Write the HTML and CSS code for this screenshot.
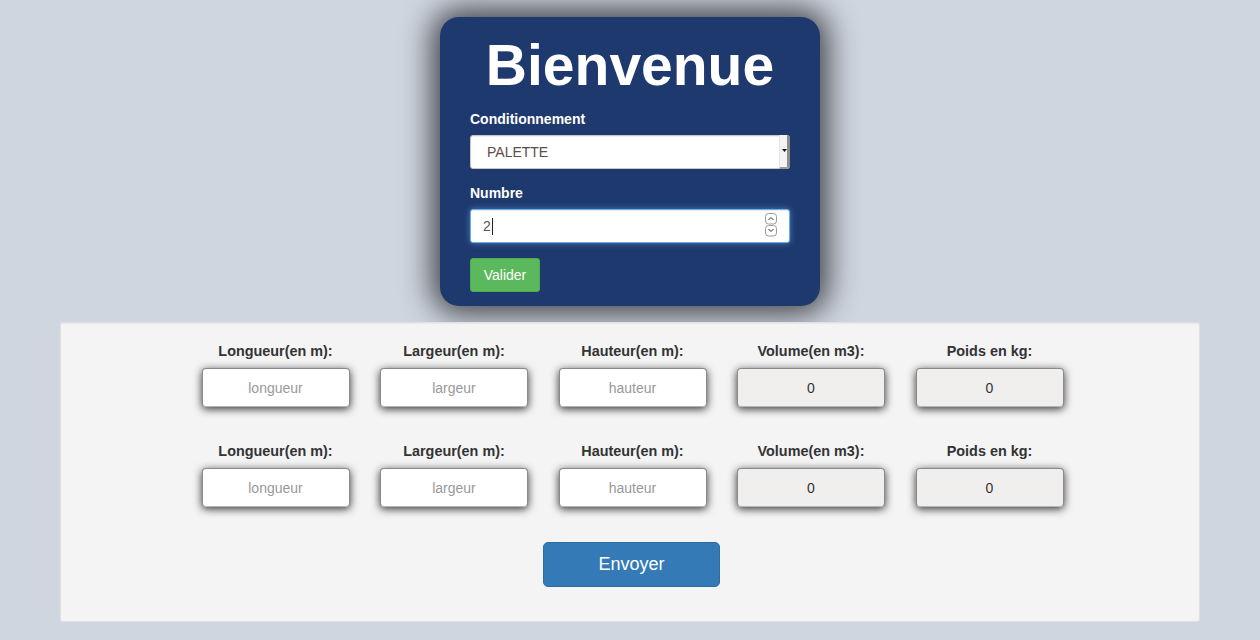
FILE: index.html
```html
<!DOCTYPE html>
<html lang="fr">
<head>
<meta charset="utf-8">
<title>Bienvenue</title>
<link rel="stylesheet" href="styles.css">
</head>
<body>
<div class="page">
  <div class="card">
    <h1 class="title">Bienvenue</h1>
    <div class="form-group">
      <label class="lbl">Conditionnement</label>
      <div class="select-wrap">
        <div class="select">PALETTE</div>
        <span class="select-arrow"><svg width="5" height="4" viewBox="0 0 5 4"><path d="M0 0h5L2.5 3z" fill="#111"/></svg></span>
      </div>
    </div>
    <div class="form-group">
      <label class="lbl">Numbre</label>
      <div class="num-wrap">
        <div class="num">2<span class="caret"></span></div>
        <span class="spin">
          <svg width="12" height="24" viewBox="0 0 12 24">
            <rect x="0.5" y="0.5" width="11" height="10.5" rx="3" fill="#fff" stroke="#9a9a9a"/>
            <path d="M3.5 7l2.5-2.5 2.5 2.5" fill="none" stroke="#333" stroke-width="1"/>
            <rect x="0.5" y="12.5" width="11" height="10.5" rx="3" fill="#fff" stroke="#9a9a9a"/>
            <path d="M3.5 16l2.5 2.5 2.5-2.5" fill="none" stroke="#333" stroke-width="1"/>
          </svg>
        </span>
      </div>
    </div>
    <button class="btn-valider">Valider</button>
  </div>

  <div class="panel">
    <div class="row">
      <div class="col"><div class="clbl">Longueur(en m):</div><input class="field" placeholder="longueur"></div>
      <div class="col"><div class="clbl">Largeur(en m):</div><input class="field" placeholder="largeur"></div>
      <div class="col"><div class="clbl">Hauteur(en m):</div><input class="field" placeholder="hauteur"></div>
      <div class="col"><div class="clbl">Volume(en m3):</div><input class="field ro" value="0" readonly></div>
      <div class="col"><div class="clbl">Poids en kg:</div><input class="field ro" value="0" readonly></div>
    </div>
    <div class="row row2">
      <div class="col"><div class="clbl">Longueur(en m):</div><input class="field" placeholder="longueur"></div>
      <div class="col"><div class="clbl">Largeur(en m):</div><input class="field" placeholder="largeur"></div>
      <div class="col"><div class="clbl">Hauteur(en m):</div><input class="field" placeholder="hauteur"></div>
      <div class="col"><div class="clbl">Volume(en m3):</div><input class="field ro" value="0" readonly></div>
      <div class="col"><div class="clbl">Poids en kg:</div><input class="field ro" value="0" readonly></div>
    </div>
    <div class="actions">
      <button class="btn-envoyer">Envoyer</button>
    </div>
  </div>
</div>
</body>
</html>
```

FILE: styles.css
```css
* { box-sizing: border-box; }
html, body { margin: 0; padding: 0; }
body {
  background: #cfd6e0;
  font-family: "Liberation Sans", Arial, sans-serif;
  font-size: 14px;
  line-height: 20px;
  color: #333;
  height: 640px;
  overflow: hidden;
}
.page {
  display: flex;
  flex-direction: column;
  align-items: center;
  padding-top: 17px;
}
.card {
  width: 380px;
  background: #1e396e;
  border-radius: 19px;
  box-shadow: 0 0 30px 8px rgba(25, 25, 30, 0.78);
  padding: 17px 30px 14px;
  color: #fff;
}
.title {
  margin: 0;
  text-align: center;
  font-size: 57px;
  line-height: 63px;
  font-weight: bold;
  color: #fff;
}
.form-group { margin-top: 12px; }
.form-group + .form-group { margin-top: 14px; }
.lbl {
  display: block;
  font-weight: bold;
  font-size: 14px;
  line-height: 20px;
  margin-bottom: 6px;
  color: #fff;
}
.select-wrap, .num-wrap { position: relative; }
.select {
  height: 34px;
  background: #fff;
  border: 1px solid #c8c8c8;
  border-radius: 3px;
  padding: 0 16px;
  line-height: 32px;
  font-size: 14px;
  color: #5a4d48;
  box-shadow: inset 0 1px 1px rgba(0,0,0,0.075);
}
.select-arrow {
  position: absolute;
  right: 0;
  top: 0;
  width: 11px;
  height: 34px;
  display: flex;
  align-items: center;
  justify-content: flex-start;
  padding-left: 2px;
  border-left: 1px solid #e4e4e4;
  border-right: 3px solid #8d8d8d;
  border-bottom: 2px solid #9a9a9a;
  border-radius: 0 3px 3px 0;
  background: #f4f4f4;
}
.num {
  height: 34px;
  background: #fff;
  border: 1px solid #66afe9;
  border-radius: 3px;
  padding: 0 12px;
  line-height: 32px;
  font-size: 14px;
  color: #555;
  box-shadow: inset 0 1px 1px rgba(0,0,0,.075), 0 0 6px rgba(102,175,233,.6);
  display: flex;
  align-items: center;
}
.caret {
  display: inline-block;
  width: 1px;
  height: 17px;
  background: #222;
  margin-left: 1px;
}
.spin {
  position: absolute;
  right: 13px;
  top: 4px;
  display: block;
  line-height: 0;
}
.btn-valider {
  margin-top: 15px;
  width: 70px;
  height: 34px;
  background: #5cb85c;
  border: 1px solid #4cae4c;
  border-radius: 3px;
  color: #fff;
  font-family: "Liberation Sans", Arial, sans-serif;
  font-size: 14px;
  padding: 0;
  display: block;
}
.panel {
  margin-top: 16px;
  width: 1140px;
  height: 300px;
  background: #f4f4f4;
  border: 1px solid #e1e1e1;
  border-radius: 3px;
  box-shadow: inset 0 1px 1px rgba(0,0,0,.05);
  padding-top: 18px;
}
.row {
  display: grid;
  grid-template-columns: repeat(5, 178.5px);
  justify-content: center;
  padding-left: 5px;
}
.row2 { margin-top: 34px; }
.col {
  display: flex;
  flex-direction: column;
  align-items: center;
}
.clbl {
  font-weight: bold;
  font-size: 14.4px;
  line-height: 20px;
  color: #333;
  margin-bottom: 7px;
}
.field {
  width: 148px;
  height: 39px;
  border: 1px solid #8a8a8a;
  border-bottom-color: #b5b5b5;
  border-radius: 4px;
  background: #fff;
  box-shadow: 0 2px 8px rgba(0,0,0,0.8);
  text-align: center;
  font-family: "Liberation Sans", Arial, sans-serif;
  font-size: 14px;
  color: #333;
  padding: 0 6px;
  outline: none;
}
.field::placeholder { color: #999; }
.field.ro { background: #f0efee; }
.actions {
  display: flex;
  justify-content: center;
  margin-top: 35px;
  padding-left: 3px;
}
.btn-envoyer {
  width: 177px;
  height: 45px;
  background: #337ab7;
  border: 1px solid #2e6da4;
  border-radius: 5px;
  color: #fff;
  font-family: "Liberation Sans", Arial, sans-serif;
  font-size: 18px;
  padding: 0;
}
```
